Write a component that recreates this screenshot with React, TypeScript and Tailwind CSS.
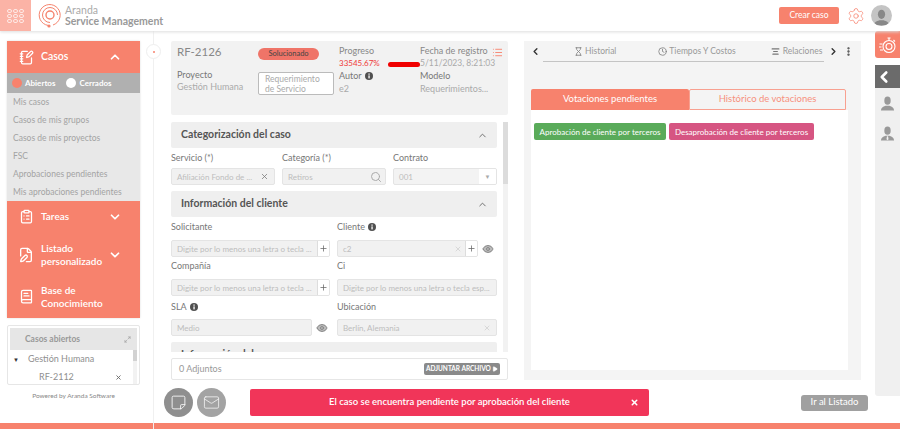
import { AlignCenter, BookText, ChevronDown, ChevronLeft, ChevronRight, ChevronUp, ClipboardList, Clock, EllipsisVertical, Eye, FilePen, Hourglass, List, Mail, Maximize2, NotebookPen, Play, Plus, Search, Settings, StickyNote, X } from "lucide-react";
import type { ReactNode } from "react";

const caseLinks = ["Mis casos", "Casos de mis grupos", "Casos de mis proyectos", "FSC", "Aprobaciones pendientes", "Mis aprobaciones pendientes"];

function Logo() {
  return (
    <svg width="24" height="26" viewBox="0 0 24 26" fill="none" stroke="#f5836d" strokeWidth="1">
      <path d="M10 22.4A10.5 10.5 0 1 1 15 22" />
      <path d="M12 19.5A7.5 7.5 0 1 1 19.5 12" />
      <circle cx="12" cy="12" r="4" strokeWidth="1.4" />
      <circle cx="11" cy="23" r="1.6" fill="#f5836d" stroke="none" />
    </svg>
  );
}

// head and shoulders, used in the header avatar and the right rail
function Bust({ size, color, tie }: { size: number; color: string; tie?: boolean }) {
  return (
    <svg width={size} height={size} viewBox="0 0 16 16" fill={color}>
      <ellipse cx="8" cy="5" rx="3.4" ry="4.4" />
      <path d="M1 15.5c0-3 2-4 5-5h4c3 1 5 2 5 5z" />
      {tie && <path d="M7.4 11h1.2l.5 3-1.1 1.2L6.900 14z" fill="#f0f0f0" />}
    </svg>
  );
}

function StopwatchIcon() {
  return (
    <svg width="17" height="18" viewBox="0 0 17 18" fill="none" stroke="white" strokeWidth="1.1">
      <circle cx="10" cy="10.500" r="6" />
      <circle cx="10" cy="10.500" r="3" />
      <path d="M8.500 2h3M10 2v2.500M14.500 4l1.500 1.500M0.500 8h3M0 11h2.500M1 14h3" />
    </svg>
  );
}

function InfoDot() {
  return (
    <svg width="8" height="8" viewBox="0 0 8 8">
      <circle cx="4" cy="4" r="4" fill="#505050" />
      <rect x="3.400" y="3.400" width="1.300" height="3" fill="white" />
      <rect x="3.400" y="1.500" width="1.300" height="1.200" fill="white" />
    </svg>
  );
}

function Accordion({ title }: { title: string }) {
  return (
    <div className="h-[26px] bg-[#efefef] rounded-[2px] flex items-center justify-between pl-[10px] pr-[9px]">
      <span className="text-[10.5px] font-bold text-[#555]">{title}</span>
      <ChevronUp size={11} className="text-[#666]" />
    </div>
  );
}

function Label({ children, info }: { children: string; info?: boolean }) {
  return (
    <div className="h-[12px] flex items-center gap-[3px] text-[9px] leading-[12px] text-[#777]">
      {children}
      {info && <InfoDot />}
    </div>
  );
}

function Input({ text, children, className }: { text: string; children?: ReactNode; className?: string }) {
  return (
    <div className={`h-[17px] bg-[#f1f1f1] border border-[#e4e4e4] rounded-[2px] flex items-center justify-between pl-[5px] text-[8px] text-[#bdbdbd] whitespace-nowrap overflow-hidden ${className ?? ""}`}>
      <span>{text}</span>
      {children}
    </div>
  );
}

function PlusBox() {
  return (
    <div className="w-[12px] h-full bg-white border-l border-[#ddd] flex items-center justify-center shrink-0">
      <Plus size={9} strokeWidth={2} className="text-[#666]" />
    </div>
  );
}

function Sidebar() {
  return (
    <aside className="relative w-[154px] shrink-0 border-r border-[#f0f0f0] pl-[7px] pr-[13px] pt-[10px] h-[398px]">
      <div className="absolute -right-[8px] top-[13px] w-[15px] h-[15px] rounded-full bg-white border border-[#eeeeee] flex items-center justify-center">
        <span className="w-[2px] h-[2px] rounded-full bg-[#f7826d]" />
      </div>
      <div className="shadow-[0_0_2px_#ddd]">
        <div className="h-[32px] bg-[#f7826d] flex items-center text-white pl-[12px] pr-[18px]">
          <NotebookPen size={15} />
          <span className="ml-[7px] text-[10.5px] font-semibold">Casos</span>
          <ChevronUp size={14} strokeWidth={3} className="ml-auto" />
        </div>
        <div className="h-[20px] bg-[#b0b0b0] flex items-center pl-[5px] text-white text-[8px] font-bold">
          <span className="w-[10px] h-[10px] rounded-full bg-[#f7826d] mr-[3px]" />
          Abiertos
          <span className="w-[10px] h-[10px] rounded-full bg-white ml-[11px] mr-[3px]" />
          Cerrados
        </div>
        <div className="h-[108px] bg-[#e8e8e8] flex flex-col pl-[6px] text-[8.5px] text-[#a3a3a3]">
          {caseLinks.map((link) => (
            <div key={link} className="h-[18px] flex items-center">{link}</div>
          ))}
        </div>
        <div className="bg-[#f7826d] text-white text-[10px] font-semibold h-[117px] flex flex-col">
          <div className="h-[31px] flex items-center pl-[12px] pr-[18px]">
            <ClipboardList size={15} />
            <span className="ml-[7px]">Tareas</span>
            <ChevronDown size={14} strokeWidth={3} className="ml-auto" />
          </div>
          <div className="h-[45px] flex items-center pl-[11px] pr-[18px]">
            <FilePen size={16} />
            <span className="ml-[7px] leading-[13px]">Listado<br />personalizado</span>
            <ChevronDown size={14} strokeWidth={3} className="ml-auto" />
          </div>
          <div className="h-[39px] flex items-center pl-[12px]">
            <BookText size={15} />
            <span className="ml-[7px] leading-[13px]">Base de<br />Conocimiento</span>
          </div>
        </div>
      </div>
      <div className="mt-[7px] h-[60px] border border-[#e6e6e6] rounded-[2px] px-[2px] pt-[2px] overflow-hidden">
        <div className="h-[22px] bg-[#e6e6e6] flex items-center justify-between pl-[15px] pr-[6px] text-[8.5px] font-bold text-[#999]">
          Casos abiertos
          <Maximize2 size={7} />
        </div>
        <div className="flex">
          <div className="flex-1 text-[9px] text-[#8f8f8f]">
            <div className="h-[18px] flex items-center pl-[3px]">
              <span className="text-[6px] text-[#333]">▼</span>
              <span className="ml-[9px]">Gestión Humana</span>
            </div>
            <div className="h-[18px] flex items-center justify-between pl-[29px] pr-[11px]">
              RF-2112
              <X size={7} strokeWidth={3} className="text-[#666]" />
            </div>
          </div>
          <div className="w-[4px] bg-[#f2f2f2]">
            <div className="h-[11px] bg-[#d2d2d2]" />
          </div>
        </div>
      </div>
      <div className="mt-[6px] text-center text-[6.5px] text-[#888]">Powered by Aranda Software</div>
    </aside>
  );
}

function InfoPanel() {
  return (
    <div className="relative h-[74px] bg-[#f2f2f2] rounded-[2px] grid grid-cols-[81px_81px_81px_1fr] pl-[6px] pt-[4px] text-[9px] leading-[12px] text-[#888]">
      <div>
        <div className="text-[11.5px] leading-[13px] text-[#888] h-[23px]">RF-2126</div>
        <div className="mt-[1px] text-[#777]">Proyecto</div>
        <div className="text-[#aaa]">Gestión Humana</div>
      </div>
      <div>
        <div className="w-[61px] h-[12px] mt-[3px] rounded-full bg-[#ef7468] text-[7.5px] leading-[12px] text-[#444] text-center">Solucionado</div>
        <div className="mt-[12px] w-[76px] h-[23px] bg-white border border-[#bbb] rounded-[2px] pl-[6px] pt-[1px] leading-[10px] text-[8.5px] text-[#aaa]">Requerimiento<br />de Servicio</div>
      </div>
      <div>
        <div>Progreso</div>
        <div className="text-[#f03a3a] text-[8px]">33545.67%</div>
        <div className="flex items-center gap-[3px] mt-[1px] text-[#777]">Autor <InfoDot /></div>
        <div className="text-[#aaa] mt-[1px]">e2</div>
      </div>
      <div>
        <div>Fecha de registro</div>
        <div className="text-[#aaa] text-[8.5px]">5/11/2023, 8:21:03</div>
        <div className="mt-[1px] text-[#777]">Modelo</div>
        <div className="text-[#aaa] mt-[1px]">Requerimientos...</div>
      </div>
      <List size={11} className="absolute left-[321px] top-[6px] text-[#f7826d]" />
      <div className="absolute left-[217px] top-[21px] w-[32px] h-[5px] rounded-full bg-[#f00000]" />
    </div>
  );
}

function CaseForm() {
  return (
    <div className="relative h-[230px] overflow-hidden mt-[7px]">
      <div className="w-[326px]">
        <Accordion title="Categorización del caso" />
        <div className="grid grid-cols-3 gap-x-[7px] mt-[4px]">
          <Label>Servicio (*)</Label>
          <Label>Categoría (*)</Label>
          <Label>Contrato</Label>
        </div>
        <div className="grid grid-cols-3 gap-x-[7px] mt-[4px]">
          <Input text="Afiliación Fondo de ..."><X size={9} className="text-[#777] mr-[5px]" /></Input>
          <Input text="Retiros"><Search size={12} className="text-[#aaa] mr-[3px]" /></Input>
          <Input text="001" className="bg-[#f3f3f3]">
            <div className="w-[17px] h-full bg-white flex items-center justify-center text-[6px] text-[#aaa]">▼</div>
          </Input>
        </div>
        <div className="mt-[6px]"><Accordion title="Información del cliente" /></div>
        <div className="grid grid-cols-[159px_160px] gap-x-[7px] mt-[4px]">
          <Label>Solicitante</Label>
          <Label info>Cliente</Label>
        </div>
        <div className="grid grid-cols-[159px_160px] gap-x-[7px] mt-[7px]">
          <Input text="Digite por lo menos una letra o tecla ..."><PlusBox /></Input>
          <div className="flex items-center gap-[4px]">
            <Input text="c2" className="w-[141px]">
              <div className="flex items-center h-full">
                <X size={8} className="text-[#ccc] mr-[3px]" />
                <PlusBox />
              </div>
            </Input>
            <Eye size={12} fill="#bbb" className="text-[#888]" />
          </div>
        </div>
        <div className="grid grid-cols-[159px_160px] gap-x-[7px] mt-[3px]">
          <Label>Compañía</Label>
          <Label>Ci</Label>
        </div>
        <div className="grid grid-cols-[159px_160px] gap-x-[7px] mt-[7px]">
          <Input text="Digite por lo menos una letra o tecla ..."><PlusBox /></Input>
          <Input text="Digite por lo menos una letra o tecla esp..." />
        </div>
        <div className="grid grid-cols-[159px_160px] gap-x-[7px] mt-[5px]">
          <Label info>SLA</Label>
          <Label>Ubicación</Label>
        </div>
        <div className="grid grid-cols-[159px_160px] gap-x-[7px] mt-[6px]">
          <div className="flex items-center gap-[4px]">
            <Input text="Medio" className="w-[141px]" />
            <Eye size={12} fill="#bbb" className="text-[#888]" />
          </div>
          <Input text="Berlín, Alemania"><X size={8} className="text-[#ccc] mr-[5px]" /></Input>
        </div>
        <div className="mt-[6px]"><Accordion title="Información del caso" /></div>
      </div>
      <div className="absolute right-0 top-0 w-[5px] h-full bg-[#f2f2f2]">
        <div className="h-[62px] bg-[#dcdcdc]" />
      </div>
    </div>
  );
}

function DetailPanel() {
  return (
    <section className="w-[337px] h-[339px] bg-[#f4f4f4] ml-[16px] px-[7px]">
      <div className="h-[21px] -mx-[7px] flex items-center pl-[6px] pr-[7px] text-[8.5px] text-[#999] whitespace-nowrap">
        <ChevronLeft size={11} strokeWidth={3} className="text-[#333]" />
        <div className="w-[281px] h-full ml-[2px] border-b border-[#c4c4c4] flex items-center">
          <Hourglass size={9} className="ml-[31px] text-[#777]" />
          <span className="ml-[2px]">Historial</span>
          <Clock size={9} className="ml-[42px] text-[#777]" />
          <span className="ml-[2px]">Tiempos Y Costos</span>
          <AlignCenter size={9} strokeWidth={3} className="ml-[35px] text-[#777]" />
          <span className="ml-[3px]">Relaciones</span>
        </div>
        <ChevronRight size={11} strokeWidth={3} className="ml-[4px] text-[#333]" />
        <EllipsisVertical size={11} strokeWidth={3} className="ml-auto text-[#444]" />
      </div>
      <div className="mt-[27px] flex w-[315px] h-[21px] text-[9.5px]">
        <div className="w-[158px] bg-[#f7826d] text-white rounded-t-[2px] flex items-center justify-center">Votaciones pendientes</div>
        <div className="w-[157px] border border-[#f8a090] text-[#f7907d] rounded-t-[2px] flex items-center justify-center">Histórico de votaciones</div>
      </div>
      <div className="h-[260px] w-[317px] bg-white pt-[13px] pl-[3px] flex items-start gap-[3px] text-[8px] text-white">
        <div className="h-[17px] w-[132px] bg-[#5aab5a] rounded-[2px] flex items-center justify-center whitespace-nowrap">Aprobación de cliente por terceros</div>
        <div className="h-[17px] w-[145px] bg-[#d65582] rounded-[2px] flex items-center justify-center whitespace-nowrap">Desaprobación de cliente por terceros</div>
      </div>
    </section>
  );
}

export default function App() {
  return (
    <div className="w-[900px] h-[429px] overflow-hidden bg-white flex flex-col font-['Lato',sans-serif]">
      <header className="h-[31px] shrink-0 flex items-center shadow-[0_1px_3px_#ddd] z-10 bg-white">
        <div className="w-[31px] h-full bg-[#fbb3a6] grid grid-cols-3 gap-[1px] place-content-center justify-items-center px-[7px]">
          {Array.from({ length: 9 }).map((_, i) => (
            <span key={i} className="w-[5px] h-[4px] rounded-full border border-white/70" />
          ))}
        </div>
        <div className="ml-[7px]"><Logo /></div>
        <div className="ml-[3px] text-[#aaa] text-[10.5px] leading-[11px] pt-[1px]">
          <div>Aranda</div>
          <div className="font-bold text-[#999]">Service Management</div>
        </div>
        <div className="ml-auto mr-[8px] flex items-center">
          <div className="w-[60px] h-[17px] bg-[#f7826d] rounded-[2px] text-white text-[8.5px] flex items-center justify-center">Crear caso</div>
          <Settings size={18} strokeWidth={1} className="ml-[8px] text-[#f7826d]" />
          <div className="ml-[6px] w-[21px] h-[21px] rounded-full bg-[#c4c4c4] flex items-end justify-center overflow-hidden">
            <Bust size={17} color="#888" />
          </div>
        </div>
      </header>

      <div className="flex flex-1 min-h-0">
        <Sidebar />
        <div className="w-[17px] shrink-0" />
        <main className="pt-[10px] w-[690px] shrink-0">
          <div className="flex">
            <div className="w-[337px]">
              <InfoPanel />
              <CaseForm />
              <div className="mt-[6px] h-[22px] bg-white border border-[#e6e6e6] rounded-[2px] flex items-center justify-between pl-[7px] pr-[7px] text-[9px] text-[#999]">
                0 Adjuntos
                <div className="h-[12px] w-[76px] bg-[#8a8a8a] rounded-[2px] flex items-center justify-between px-[2px] text-[6.5px] font-bold text-white whitespace-nowrap">
                  ADJUNTAR ARCHIVO
                  <Play size={6} fill="white" />
                </div>
              </div>
            </div>
            <DetailPanel />
          </div>
          <div className="mt-[8px] -ml-[7px] flex items-center">
            <div className="w-[29px] h-[29px] shrink-0 rounded-full bg-[#8f8f8f] flex items-center justify-center">
              <StickyNote size={17} strokeWidth={1.2} className="text-white rotate-90" />
            </div>
            <div className="ml-[4px] w-[29px] h-[29px] shrink-0 rounded-full bg-[#a3a3a3] flex items-center justify-center">
              <Mail size={17} strokeWidth={1} className="text-white" />
            </div>
            <div className="ml-[24px] w-[399px] h-[27px] shrink-0 bg-[#f13559] rounded-[2px] flex items-center justify-center relative text-white text-[9.5px] font-semibold">
              El caso se encuentra pendiente por aprobación del cliente
              <X size={9} strokeWidth={4} className="absolute right-[10px]" />
            </div>
            <div className="ml-[152px] w-[67px] h-[16px] shrink-0 bg-[#a0a0a0] rounded-[3px] flex items-center justify-center text-white text-[9.5px]">Ir al Listado</div>
          </div>
        </main>
        <aside className="w-[25px] ml-[14px] shrink-0">
          <div className="h-[27px] bg-[#f7826d] rounded-l-[3px] flex items-center justify-center">
            <StopwatchIcon />
          </div>
          <div className="h-[23px] mt-[7px] bg-[#6b6b6b] flex items-center">
            <ChevronLeft size={18} strokeWidth={3.5} className="text-white" />
          </div>
          <div className="h-[308px] bg-[#f0f0f0] rounded-bl-[3px] flex flex-col items-center pt-[8px] gap-[15px]">
            <Bust size={15} color="#999" />
            <Bust size={15} color="#999" tie />
          </div>
        </aside>
      </div>
      <div className="h-[6px] bg-[#f7826d] shrink-0" />
    </div>
  );
}
